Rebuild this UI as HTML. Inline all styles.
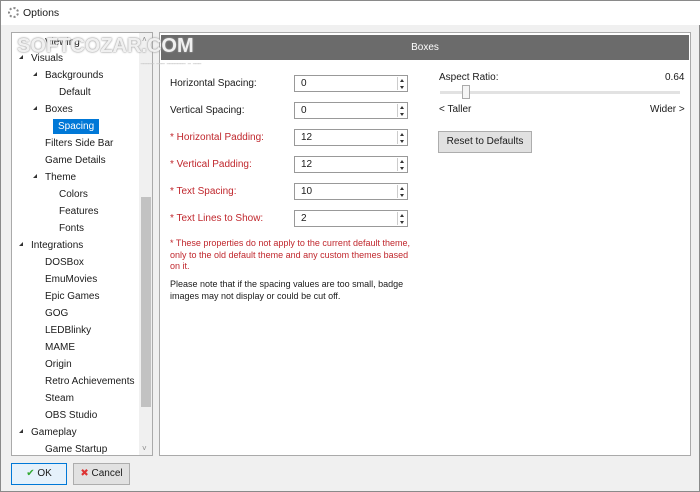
<!DOCTYPE html>
<html><head><style>
*{margin:0;padding:0;box-sizing:border-box}
body{width:700px;height:492px;background:#f0f0f0;font-family:"Liberation Sans",sans-serif;font-size:10px;color:#1a1a1a;position:relative;overflow:hidden;border:1px solid #8a8a8a}
.a{position:absolute;white-space:nowrap}
.title{left:0;top:0;width:700px;height:24px;background:#fff}
.tree{left:10px;top:31px;width:142px;height:424px;background:#fff;border:1px solid #aaa}
.sb{left:138px;top:32px;width:13px;height:422px;background:#f0f0f0}
.thumb{left:140px;top:196px;width:10px;height:210px;background:#c2c2c2}
.ti{position:absolute;font-size:10px}
.arr{position:absolute;width:0;height:0;border-left:4px solid transparent;border-bottom:4px solid #333}
.panel{left:158px;top:31px;width:532px;height:424px;background:#fff;border:1px solid #aaa}
.hdr{left:160px;top:34px;width:528px;height:25px;background:#6b6b6b;color:#fff;text-align:center;line-height:25px;font-size:10px}
.lbl{font-size:10px}
.red{color:#c0272d}
.inp{position:absolute;left:293px;width:114px;height:17px;border:1px solid #999;background:#fff;font-size:10px;line-height:15px;padding-left:6px}
.sp{position:absolute;right:1px;top:1px;width:9px;height:13px;border-left:1px solid #ccc}
.sp:before,.sp:after{content:"";position:absolute;left:2px;border-left:2.5px solid transparent;border-right:2.5px solid transparent}
.sp:before{top:2px;border-bottom:3px solid #333}
.sp:after{bottom:1px;border-top:3px solid #333}
.btn{position:absolute;background:#e1e1e1;border:1px solid #adadad;font-size:10px;text-align:center}
</style></head><body>
<div class="a title"></div>
<div class="a" style="left:7px;top:6px;width:11px;height:11px;border-radius:50%;border:2px dotted #888"></div>
<div class="a" style="left:22px;top:6px;font-size:10.5px">Options</div>

<div class="a tree">
<div class="ti" style="left:33px;top:4px">Viewing</div>
<div class="arr" style="left:7px;top:22px"></div><div class="ti" style="left:19px;top:20px">Visuals</div>
<div class="arr" style="left:21px;top:39px"></div><div class="ti" style="left:33px;top:37px">Backgrounds</div>
<div class="ti" style="left:47px;top:54px">Default</div>
<div class="arr" style="left:21px;top:73px"></div><div class="ti" style="left:33px;top:71px">Boxes</div>
<div class="ti" style="left:41px;top:86px;background:#0078d7;color:#fff;padding:2px 5px">Spacing</div>
<div class="ti" style="left:33px;top:105px">Filters Side Bar</div>
<div class="ti" style="left:33px;top:122px">Game Details</div>
<div class="arr" style="left:21px;top:141px"></div><div class="ti" style="left:33px;top:139px">Theme</div>
<div class="ti" style="left:47px;top:156px">Colors</div>
<div class="ti" style="left:47px;top:173px">Features</div>
<div class="ti" style="left:47px;top:190px">Fonts</div>
<div class="arr" style="left:7px;top:209px"></div><div class="ti" style="left:19px;top:207px">Integrations</div>
<div class="ti" style="left:33px;top:224px">DOSBox</div>
<div class="ti" style="left:33px;top:241px">EmuMovies</div>
<div class="ti" style="left:33px;top:258px">Epic Games</div>
<div class="ti" style="left:33px;top:275px">GOG</div>
<div class="ti" style="left:33px;top:292px">LEDBlinky</div>
<div class="ti" style="left:33px;top:309px">MAME</div>
<div class="ti" style="left:33px;top:326px">Origin</div>
<div class="ti" style="left:33px;top:343px">Retro Achievements</div>
<div class="ti" style="left:33px;top:360px">Steam</div>
<div class="ti" style="left:33px;top:377px">OBS Studio</div>
<div class="arr" style="left:7px;top:396px"></div><div class="ti" style="left:19px;top:394px">Gameplay</div>
<div class="ti" style="left:33px;top:411px">Game Startup</div>
</div>
<div class="a sb"></div><div class="a thumb"></div>
<div class="a" style="left:141px;top:34px;color:#888;font-size:8px">˄</div>
<div class="a" style="left:141px;top:443px;color:#888;font-size:8px">˅</div>

<div class="a panel"></div>
<div class="a hdr">Boxes</div>
<div class="a" style="left:16px;top:34px;font-size:20px;font-weight:bold;color:rgba(255,255,255,.85);text-shadow:0 0 2px #999,0 0 1px #999">SOFTCOZAR.COM</div>
<div class="a" style="left:30px;top:55px;width:170px;height:10px;color:rgba(200,200,200,.6);font-size:9px;font-weight:bold;letter-spacing:1px;text-align:right">ـــ ـ ـــــــ ـــ ـــــ</div>

<div class="a lbl" style="left:169px;top:77px">Horizontal Spacing:</div>
<div class="a lbl" style="left:169px;top:104px">Vertical Spacing:</div>
<div class="a lbl red" style="left:169px;top:131px">* Horizontal Padding:</div>
<div class="a lbl red" style="left:169px;top:158px">* Vertical Padding:</div>
<div class="a lbl red" style="left:169px;top:185px">* Text Spacing:</div>
<div class="a lbl red" style="left:169px;top:212px">* Text Lines to Show:</div>
<div class="inp" style="top:74px">0<div class="sp"></div></div>
<div class="inp" style="top:101px">0<div class="sp"></div></div>
<div class="inp" style="top:128px">12<div class="sp"></div></div>
<div class="inp" style="top:155px">12<div class="sp"></div></div>
<div class="inp" style="top:182px">10<div class="sp"></div></div>
<div class="inp" style="top:209px">2<div class="sp"></div></div>
<div class="a red" style="left:169px;top:237px;font-size:9px;line-height:11.5px;white-space:normal;width:248px">* These properties do not apply to the current default theme, only to the old default theme and any custom themes based on it.</div>
<div class="a" style="left:169px;top:278px;font-size:9px;line-height:11.5px;white-space:normal;width:235px">Please note that if the spacing values are too small, badge images may not display or could be cut off.</div>

<div class="a lbl" style="left:438px;top:71px">Aspect Ratio:</div>
<div class="a lbl" style="left:664px;top:71px">0.64</div>
<div class="a" style="left:439px;top:90px;width:240px;height:3px;background:#e2e2e2"></div>
<div class="a" style="left:461px;top:84px;width:8px;height:14px;background:#f5f5f5;border:1px solid #aaa"></div>
<div class="a lbl" style="left:438px;top:103px">&lt; Taller</div>
<div class="a lbl" style="left:649px;top:103px">Wider &gt;</div>
<div class="btn" style="left:437px;top:130px;width:94px;height:22px;line-height:20px">Reset to Defaults</div>

<div class="btn" style="left:10px;top:462px;width:56px;height:22px;line-height:20px;border-color:#0078d7;background:#e5f1fb"><span style="color:#3a3">✔</span> OK</div>
<div class="btn" style="left:72px;top:462px;width:57px;height:22px;line-height:20px"><span style="color:#d33">✖</span> Cancel</div>
</body></html>
